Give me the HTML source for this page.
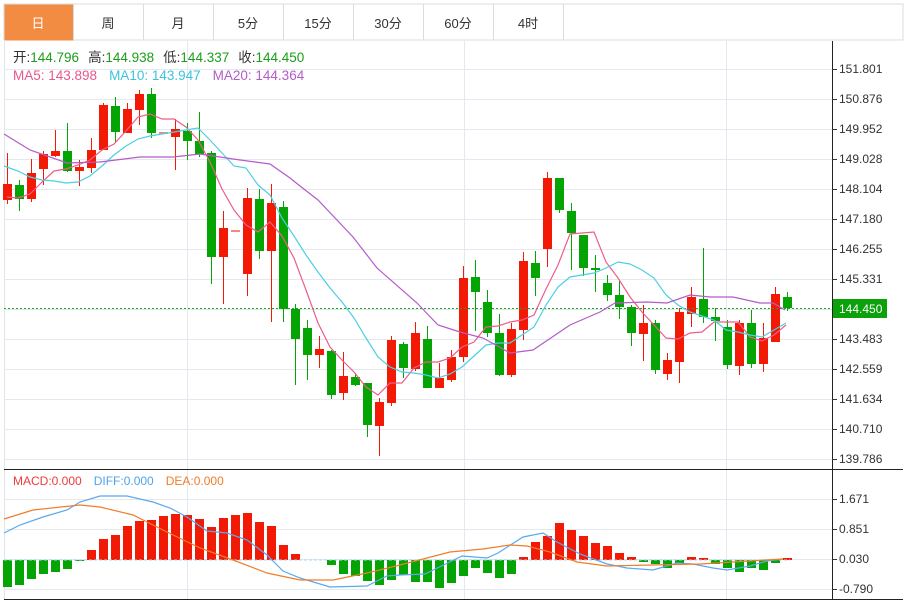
<!DOCTYPE html>
<html><head><meta charset="utf-8"><style>
body{margin:0;background:#fff;width:907px;height:603px;overflow:hidden;font-family:"Liberation Sans","Noto Sans CJK SC",sans-serif}
svg{position:absolute;left:0;top:0}
</style></head><body>
<svg id="s" width="907" height="603" xmlns="http://www.w3.org/2000/svg" font-family="Liberation Sans, Noto Sans CJK SC, sans-serif">
<rect x="4" y="4" width="899" height="36" fill="#fff" stroke="#dcdcdc"/>
<rect x="4.5" y="4.5" width="69" height="36" fill="#f28c43"/>
<g stroke="#dcdcdc"><line x1="73.5" y1="4" x2="73.5" y2="40"/><line x1="143.5" y1="4" x2="143.5" y2="40"/><line x1="213.5" y1="4" x2="213.5" y2="40"/><line x1="283.5" y1="4" x2="283.5" y2="40"/><line x1="353.5" y1="4" x2="353.5" y2="40"/><line x1="423.5" y1="4" x2="423.5" y2="40"/><line x1="493.5" y1="4" x2="493.5" y2="40"/><line x1="563.5" y1="4" x2="563.5" y2="40"/></g>
<g font-size="13" text-anchor="middle" fill="#333"><text x="38" y="28" fill="#fff">日</text><text x="108" y="28">周</text><text x="178" y="28">月</text><text x="248" y="28">5分</text><text x="318" y="28">15分</text><text x="388" y="28">30分</text><text x="458" y="28">60分</text><text x="528" y="28">4时</text></g>
<line x1="4.5" y1="40" x2="4.5" y2="600" stroke="#dfe5ea"/>
<g id="grid" stroke="#e3e9ef"></g>
<g stroke="#e3e9ef"><line x1="187.5" y1="41" x2="187.5" y2="599"/><line x1="464.5" y1="41" x2="464.5" y2="599"/><line x1="726.5" y1="41" x2="726.5" y2="599"/></g>
<line x1="832.5" y1="41" x2="832.5" y2="600" stroke="#222"/>
<line x1="4" y1="469.5" x2="903" y2="469.5" stroke="#222"/>
<line x1="4" y1="599.5" x2="903" y2="599.5" stroke="#222"/>
<g id="c"></g>
<line x1="4" y1="308.5" x2="832" y2="308.5" stroke="#1aa51a" stroke-dasharray="2,2"/>
<g id="l" fill="none" stroke-width="1.2"></g>
<g id="ax" font-size="12" fill="#333"></g>
<rect x="833" y="299" width="54" height="19" fill="#0aa10a"/>
<text x="839" y="313" font-size="12" fill="#fff">144.450</text>
<g font-size="13.5"><text x="13" y="62" fill="#333">开:<tspan fill="#1a9e1a">144.796</tspan><tspan dx="9">高:</tspan><tspan fill="#1a9e1a">144.938</tspan><tspan dx="9">低:</tspan><tspan fill="#1a9e1a">144.337</tspan><tspan dx="9">收:</tspan><tspan fill="#1a9e1a">144.450</tspan></text>
<text x="13" y="80" fill="#e8578a">MA5: 143.898<tspan dx="12" fill="#3cc3dc">MA10: 143.947</tspan><tspan dx="12" fill="#b45cc8">MA20: 144.364</tspan></text>
<text x="13" y="485" font-size="12" fill="#f03a3a">MACD:0.000<tspan dx="12" fill="#4ea3ec">DIFF:0.000</tspan><tspan dx="12" fill="#f07d2a">DEA:0.000</tspan></text></g>
</svg>
<script>
var NS="http://www.w3.org/2000/svg";
function el(p,t,a){var e=document.createElementNS(NS,t);for(var k in a)e.setAttribute(k,a[k]);document.getElementById(p).appendChild(e);return e;}
for(var y=69;y<=459;y+=30)el("grid","line",{x1:4,x2:832,y1:y+.5,y2:y+.5});
for(var y=499;y<=589;y+=30)el("grid","line",{x1:4,x2:832,y1:y+.5,y2:y+.5});
var labs=["151.801","150.876","149.952","149.028","148.104","147.180","146.255","145.331","144.407","143.483","142.559","141.634","140.710","139.786"];
labs.forEach(function(t,i){var y=69+i*30;if(i==8)return;el("ax","line",{x1:832,x2:837,y1:y+.5,y2:y+.5,stroke:"#333"});var e=el("ax","text",{x:839,y:y+4});e.textContent=t;});
[["1.671",499],["0.851",529],["0.030",559],["-0.790",589]].forEach(function(a){el("ax","line",{x1:832,x2:837,y1:a[1]+.5,y2:a[1]+.5,stroke:"#333"});var e=el("ax","text",{x:839,y:a[1]+4});e.textContent=a[0];});
var C=[["r",184,200,153,204],["g",185,199,180,211],["r",173,199,159,202],["r",154,169,151,185],["r",151,156,130,157],["g",151,171,123,172],["r",167,171,160,186],["r",150,168,138,173],["r",105,150,103,150],["g",106,132,97,142],["r",109,133,103,133],["r",94,110,90,125],["g",94,133,88,138],["d",132,133,132,133],["r",129,137,119,170],["g",131,141,123,160],["g",141,154,112,157],["g",153,257,151,284],["r",228,257,211,304],["d",230,231,230,231],["r",198,274,188,296],["g",199,251,189,259],["r",203,251,184,322],["g",207,309,201,322],["g",309,339,304,385],["g",328,355,320,380],["r",349,355,336,368],["g",351,395,350,399],["r",376,393,352,400],["g",377,385,373,386],["g",383,425,383,437],["r",402,426,398,456],["r",340,403,336,406],["g",344,368,342,378],["r",333,369,322,371],["g",339,388,326,388],["r",378,388,363,388],["r",357,380,350,382],["r",278,357,266,362],["g",277,292,260,331],["g",302,333,290,337],["g",333,375,314,376],["r",329,375,323,377],["r",261,330,252,340],["g",263,278,251,296],["r",178,249,172,267],["g",178,210,178,213],["g",211,233,203,270],["g",235,268,235,276],["g",268,270,255,292],["g",283,295,275,301],["g",295,307,280,319],["g",307,333,305,346],["r",323,334,305,361],["g",323,370,320,374],["r",360,374,353,380],["r",312,362,308,383],["r",297,314,287,327],["g",299,317,248,323],["g",317,321,308,341],["g",327,365,320,369],["r",323,366,320,375],["g",323,364,310,368],["r",338,364,323,372],["r",294,342,287,342],["g",297,308,292,311]];
C.forEach(function(c,i){var x=7+12*i;var col=c[0]=="r"?"#f21a05":c[0]=="g"?"#04a404":"#f08a80";
el("c","line",{x1:x+.5,x2:x+.5,y1:c[3],y2:c[4],stroke:col});
el("c","rect",{x:x-4,y:c[1],width:9,height:Math.max(2,c[2]-c[1]),fill:col});});
var M=[587,585,579,574,572,569,561,550,539,535,526,521,520,516,514,515,519,527,518,515,513,522,526,545,554,560,560,565,574,576,581,585,580,575,582,582,588,583,576,568,573,578,574,557,542,536,523,530,536,543,546,553,557,562,564,568,563,557,558,564,568,572,568,570,563,558];
M.forEach(function(v,i){var x=7+12*i;if(v==560)return;var r=v<560;el("c","rect",{x:x-4,y:r?v:560,width:9,height:Math.abs(v-560),fill:r?"#f21a05":"#04a404"});});
el("c","line",{x1:4,x2:790,y1:560,y2:560,stroke:"#a8d8f0","stroke-dasharray":"3,2"});
function pl(pts,col){el("l","polyline",{points:pts,stroke:col});}
pl("7,197 18,198 30,194 42,182 54,171 66,169 78,165 90,160 102,150 114,144 126,131 138,117 150,114 162,119 174,119 186,127 198,140 210,162 222,189 234,210 246,225 258,232 270,222 282,236 294,258 306,290 318,323 330,347 342,360 354,372 366,387 378,395 390,383 402,383 414,368 426,362 438,362 450,358 462,347 474,342 486,327 498,326 510,322 522,320 534,315 546,289 558,265 570,234 582,233 594,232 606,262 618,278 630,297 642,312 654,325 666,338 678,339 690,333 702,332 714,322 726,322 738,322 750,337 762,341 774,335 786,325","#ee5d8c");
pl("4,166 18,171 30,177 42,180 54,181 66,183 78,182 90,176 102,166 114,155 126,146 138,139 150,136 162,134 174,132 186,130 198,128 210,140 222,153 234,166 246,168 258,185 270,195 282,218 294,236 306,255 318,272 330,288 342,302 354,318 366,338 378,357 390,367 402,372 414,373 426,375 438,378 450,374 462,367 474,356 486,345 498,343 510,343 522,335 534,327 546,305 558,287 570,277 582,275 594,273 606,268 618,262 630,264 642,270 654,278 666,295 678,305 690,312 702,316 714,320 726,330 738,332 750,335 762,337 774,330 786,323","#4ccfe3");
pl("4,134 30,150 67,163 100,162 140,157 173,157 200,154 233,159 270,164 290,178 300,186 318,200 353,237 377,268 417,303 438,325 460,332 483,338 510,353 533,350 570,325 600,312 615,303 647,302 667,303 690,295 710,297 733,297 760,303 773,303 785,310","#b45cc8");
pl("4,533 20,525 43,517 67,510 80,502 100,496 127,496 153,502 170,508 187,517 207,531 227,533 247,540 267,555 283,571 300,578 330,587 367,586 387,576 400,575 425,574 462,556 487,558 498,553 523,537 543,533 557,542 580,554 607,564 627,568 653,570 677,563 693,564 713,568 727,570 750,566 767,561 783,559","#5aa9ef");
pl("4,519 33,510 80,505 100,507 133,515 167,532 200,548 233,560 267,573 300,580 333,580 367,573 400,565 450,552 483,549 510,545 527,546 550,552 577,562 607,566 650,565 700,564 733,562 783,559","#f07d2a");
</script>
</body></html>
